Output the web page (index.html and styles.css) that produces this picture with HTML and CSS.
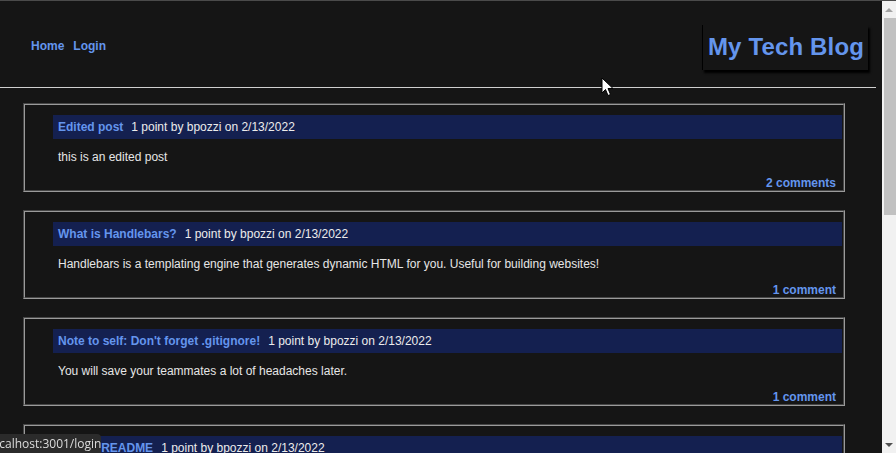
FILE: index.html
```html
<!DOCTYPE html>
<html lang="en">
<head>
<meta charset="utf-8">
<title>My Tech Blog</title>
<link rel="stylesheet" href="styles.css">
</head>
<body>
<header class="site-header">
  <nav class="nav">
    <a href="/" class="nav-link">Home</a>
    <a href="/login" class="nav-link">Login</a>
  </nav>
  <h1 class="brand">My Tech Blog</h1>
</header>
<hr class="divider">
<main class="posts">
  <article class="post">
    <div class="post-head"><a class="post-title" href="#">Edited post</a><span class="post-meta">1 point by bpozzi on 2/13/2022</span></div>
    <p class="post-body">this is an edited post</p>
    <div class="post-foot"><a class="post-comments" href="#">2 comments</a></div>
  </article>
  <article class="post">
    <div class="post-head"><a class="post-title" href="#">What is Handlebars?</a><span class="post-meta">1 point by bpozzi on 2/13/2022</span></div>
    <p class="post-body">Handlebars is a templating engine that generates dynamic HTML for you. Useful for building websites!</p>
    <div class="post-foot"><a class="post-comments" href="#">1 comment</a></div>
  </article>
  <article class="post">
    <div class="post-head"><a class="post-title" href="#">Note to self: Don't forget .gitignore!</a><span class="post-meta">1 point by bpozzi on 2/13/2022</span></div>
    <p class="post-body">You will save your teammates a lot of headaches later.</p>
    <div class="post-foot"><a class="post-comments" href="#">1 comment</a></div>
  </article>
  <article class="post">
    <div class="post-head"><a class="post-title" href="#">Write a README</a><span class="post-meta">1 point by bpozzi on 2/13/2022</span></div>
    <p class="post-body">Every project deserves a good README file.</p>
    <div class="post-foot"><a class="post-comments" href="#">1 comment</a></div>
  </article>
</main>
<div class="scrollbar" aria-hidden="true">
  <span class="sb-button"><span class="sb-arrow sb-up"></span></span>
  <span class="sb-track"><span class="sb-thumb"></span></span>
  <span class="sb-button"><span class="sb-arrow sb-down"></span></span>
</div>
<svg class="cursor" width="13" height="20" viewBox="0 0 13 20" aria-hidden="true"><path d="M1 1 L1 16 L4.5 12.5 L7 18.5 L9.5 17.5 L7 11.5 L12 11.5 Z" fill="#fff" stroke="#000" stroke-width="1" stroke-linejoin="round"/></svg>
<div class="status-bar"><span class="status-text">localhost:3001/login</span></div>
</body>
</html>
```

FILE: styles.css
```css
html {
  background: #151515;
  overflow: hidden;
}
body {
  margin: 0;
  padding-right: 14px;
  background: #151515;
  color: #e6e6e6;
  font-family: "Liberation Sans", Arial, sans-serif;
  font-size: 12px;
  border-top: 1px solid #4a4a4a;
}
a {
  text-decoration: none;
  color: #6495ed;
  font-weight: bold;
}
.site-header {
  display: flex;
  justify-content: space-between;
  align-items: flex-start;
  padding: 24px 14px 17px 31px;
}
.nav {
  display: flex;
  gap: 9px;
  margin-top: 14px;
  line-height: 14px;
}
.brand {
  margin: 0;
  font-size: 24px;
  line-height: 29px;
  font-weight: bold;
  color: #6495ed;
  padding: 7px 4px 9px 5px;
  letter-spacing: 0.15px;
  border-left: 1px solid #000;
  box-shadow: 2px 3px 2px #000;
}
.divider {
  margin: 0 6px 0 0;
  border: 0;
  height: 1px;
  background: #cfcfcf;
}
.posts {
  display: flex;
  flex-direction: column;
  gap: 18px;
  padding: 15px 37px 16px 23px;
}
.post {
  border: 2px groove #9a9a9a;
  padding: 10px 1px 0 0;
}
.post-head {
  margin-left: 28px;
  background: #142050;
  line-height: 24px;
  padding-left: 5px;
}
.post-title {
  margin-right: 8px;
}
.post-meta {
  color: #ececec;
}
.post-body {
  margin: 11px 0 0 33px;
  line-height: 14px;
}
.post-foot {
  margin-top: 12px;
  text-align: right;
  line-height: 14px;
  padding-right: 6px;
}
.scrollbar {
  position: fixed;
  top: 1px;
  right: 0;
  bottom: 0;
  width: 14px;
  background: #f1f1f1;
  display: flex;
  flex-direction: column;
}
.sb-button {
  height: 17px;
  display: flex;
  align-items: center;
  justify-content: center;
}
.sb-track {
  flex: 1;
}
.sb-thumb {
  display: block;
  margin: 0 0 0 2px;
  height: 197px;
  background: #c1c1c1;
}
.sb-arrow {
  width: 0;
  height: 0;
  border-left: 4px solid transparent;
  border-right: 4px solid transparent;
}
.sb-up {
  border-bottom: 4px solid #a3a3a3;
}
.sb-down {
  border-top: 4px solid #505050;
}
.cursor {
  position: fixed;
  left: 601px;
  top: 77px;
}
.status-bar {
  position: fixed;
  left: 0;
  bottom: 0;
  width: 101px;
  height: 19px;
  overflow: hidden;
  background: #2b2b2b;
  border-top-right-radius: 4px;
  color: #dcdcdc;
  font-family: "Open Sans", "Noto Sans", sans-serif;
  font-size: 12px;
  line-height: 19px;
  white-space: nowrap;
}
.status-text {
  display: block;
  text-indent: -11px;
}
```
